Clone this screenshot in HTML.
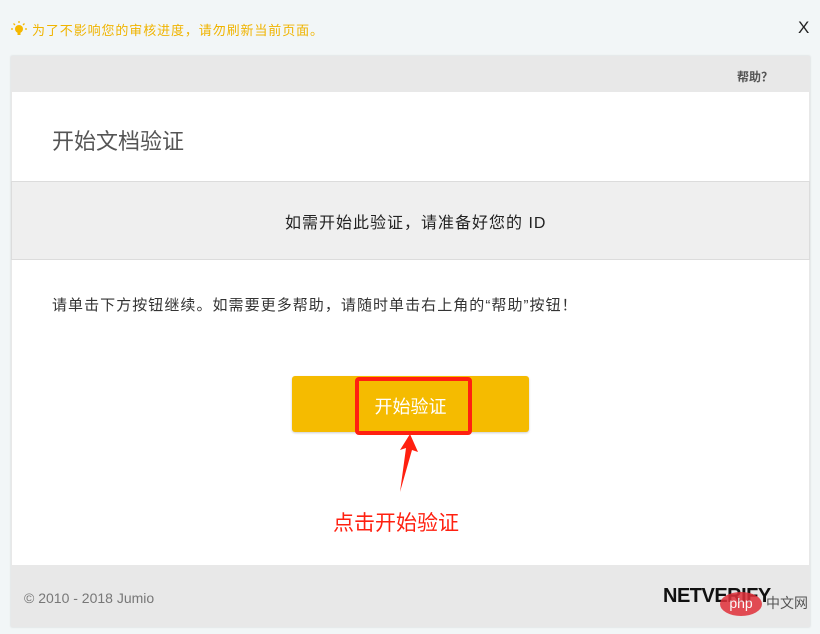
<!DOCTYPE html>
<html><head><meta charset="utf-8"><style>
body{margin:0;width:820px;height:634px;background:#f2f6f7;font-family:"Liberation Sans","Noto Sans CJK SC",sans-serif;position:relative;overflow:hidden}
.a{position:absolute}
</style></head><body>
<div class="a" style="left:11px;top:21px;width:16px;height:16px">
<svg width="16" height="16" viewBox="0 0 16 16"><circle cx="8" cy="8" r="4" fill="#f5b800"/><rect x="6.5" y="11" width="3" height="3" fill="#f5b800"/><g stroke="#f5b800" stroke-width="1.3"><line x1="8" y1="0" x2="8" y2="2"/><line x1="0" y1="8" x2="2" y2="8"/><line x1="14" y1="8" x2="16" y2="8"/><line x1="2.5" y1="2.5" x2="4" y2="4"/><line x1="13.5" y1="2.5" x2="12" y2="4"/></g></svg></div>
<div class="a" style="left:32px;top:20px;font-size:13px;color:#f0b400;letter-spacing:0.9px">为了不影响您的审核进度，请勿刷新当前页面。</div>
<div class="a" style="left:798px;top:18px;font-size:17px;color:#222">X</div>
<div class="a" style="left:11px;top:56px;width:799px;height:571px;background:#e8e8e8;box-shadow:0 0 2px rgba(0,0,0,.15)"></div>
<div class="a" style="left:737px;top:68px;font-size:12px;color:#555;font-weight:bold">帮助？</div>
<div class="a" style="left:12px;top:92px;width:797px;height:89px;background:#fff"></div>
<div class="a" style="left:52px;top:124px;font-size:22px;color:#555">开始文档验证</div>
<div class="a" style="left:11px;top:181px;width:797px;height:77px;background:#efefef;border:1px solid #dcdcdc"></div>
<div class="a" style="left:285px;top:209px;font-size:16px;color:#222;letter-spacing:1px">如需开始此验证，请准备好您的 ID</div>
<div class="a" style="left:12px;top:260px;width:797px;height:305px;background:#fff"></div>
<div class="a" style="left:52px;top:294px;font-size:15px;color:#333;letter-spacing:1.05px">请单击下方按钮继续。如需要更多帮助，请随时单击右上角的“帮助”按钮！</div>
<div class="a" style="left:292px;top:376px;width:237px;height:56px;background:#f5bb00;border-radius:3px;box-shadow:0 1px 2px rgba(0,0,0,.2)"></div>
<div class="a" style="left:355px;top:377px;width:109px;height:50px;border:4px solid #ff2010;border-radius:4px"></div>
<div class="a" style="left:292px;top:393px;width:237px;text-align:center;font-size:18px;color:#fff">开始验证</div>
<svg class="a" style="left:380px;top:430px" width="50" height="65"><polygon points="30,4 38,22 32,20 20,62 26,18 20,20" fill="#ff2010"/></svg>
<div class="a" style="left:333px;top:507px;font-size:21px;color:#ff2010">点击开始验证</div>
<div class="a" style="left:24px;top:590px;font-size:14px;color:#777">© 2010 - 2018 Jumio</div>
<div class="a" style="left:663px;top:585px;font-size:20px;font-weight:900;color:#111;transform:scaleX(1.0);transform-origin:left;letter-spacing:-0.5px">NETVERIFY</div>
<div class="a" style="left:720px;top:592px;width:42px;height:24px;border-radius:50%;background:#e0303a;opacity:.85;color:#fff;font-size:14px;text-align:center;line-height:22px">php</div>
<div class="a" style="left:766px;top:593px;font-size:14px;color:#555">中文网</div>
</body></html>
